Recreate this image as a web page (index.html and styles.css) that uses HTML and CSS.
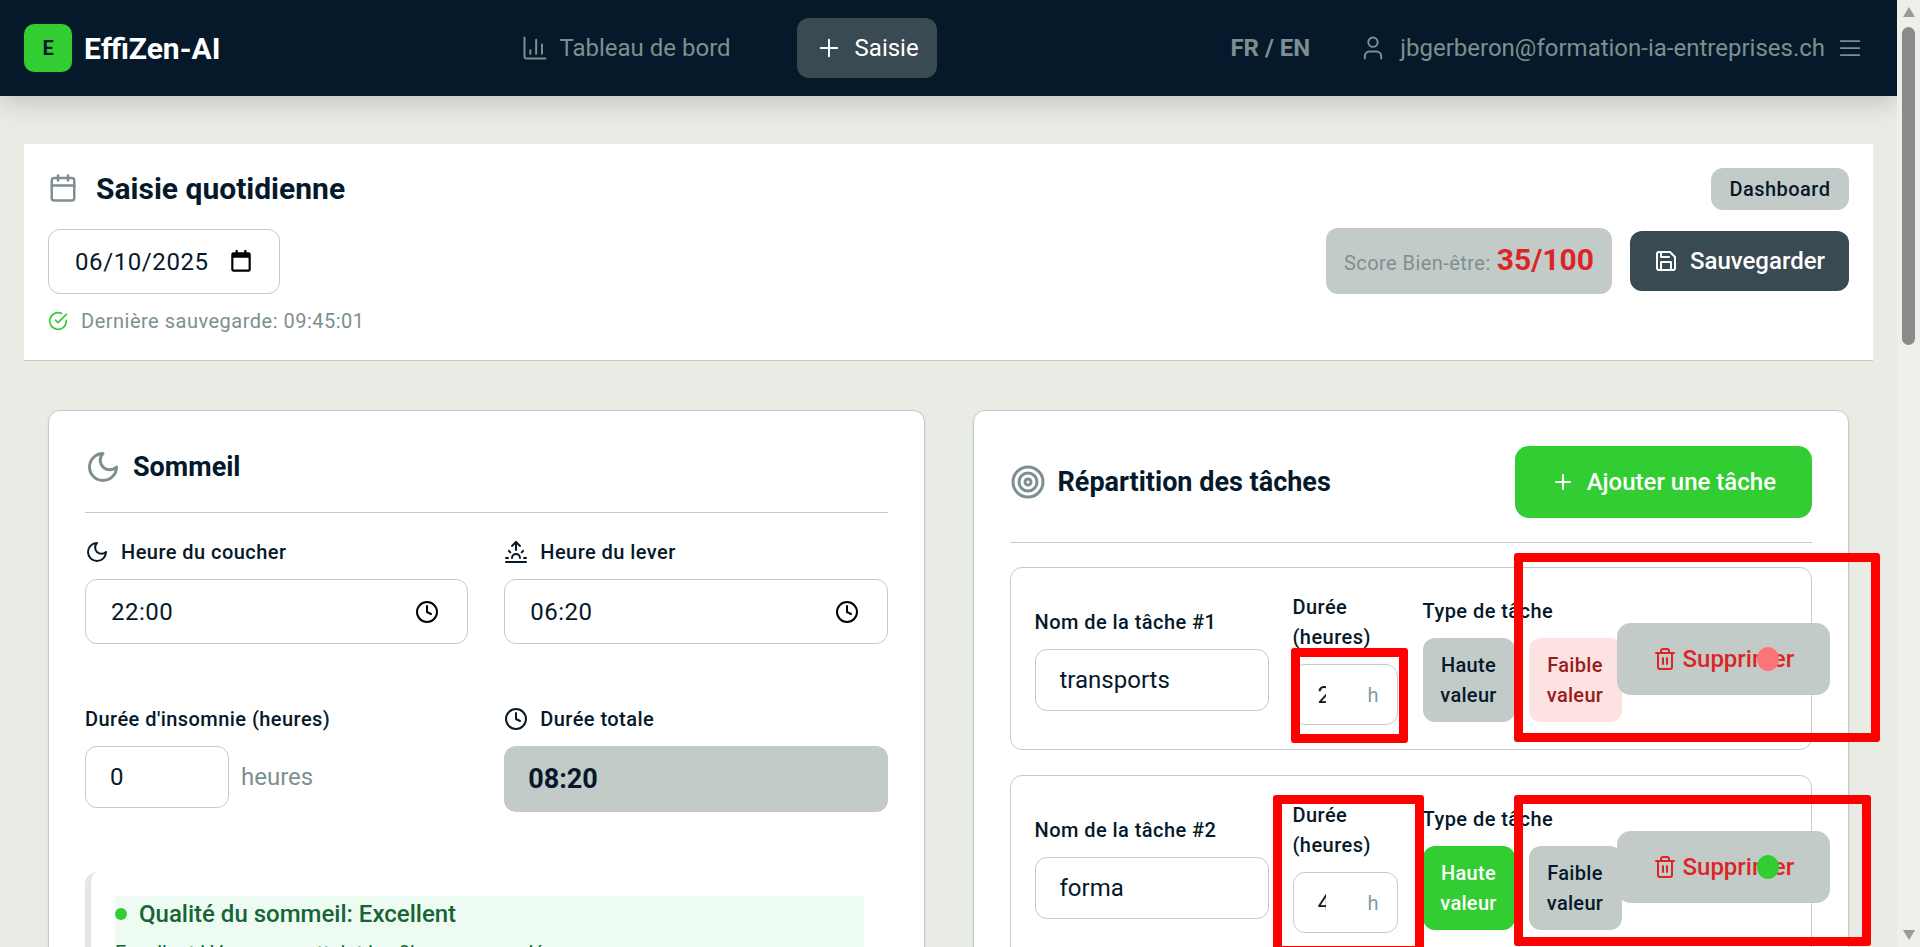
FILE: index.html
```html
<!DOCTYPE html>
<html lang="fr">
<head>
    <meta charset="UTF-8">
    <meta name="viewport" content="width=device-width, initial-scale=1.0">
    <title>EffiZen-AI - Saisie</title>
    <link rel="stylesheet" href="styles.css">
</head>
<body>
    <svg class="sprite" xmlns="http://www.w3.org/2000/svg">
        <symbol id="i-chart" viewBox="0 0 24 24"><path d="M3 3v16a2 2 0 0 0 2 2h16"/><path d="M8 17v-3"/><path d="M13 17V5"/><path d="M18 17V9"/></symbol>
        <symbol id="i-plus" viewBox="0 0 24 24"><path d="M5 12h14"/><path d="M12 5v14"/></symbol>
        <symbol id="i-user" viewBox="0 0 24 24"><path d="M19 21v-2a4 4 0 0 0-4-4H9a4 4 0 0 0-4 4v2"/><circle cx="12" cy="7" r="4"/></symbol>
        <symbol id="i-menu" viewBox="0 0 24 24"><path d="M4 6h16"/><path d="M4 12h16"/><path d="M4 18h16"/></symbol>
        <symbol id="i-calendar" viewBox="0 0 24 24"><rect x="3" y="4" width="18" height="18" rx="2"/><path d="M16 2v4"/><path d="M8 2v4"/><path d="M3 10h18"/></symbol>
        <symbol id="i-check" viewBox="0 0 24 24"><path d="M22 11.08V12a10 10 0 1 1-5.93-9.14"/><path d="M22 4 12 14.01l-3-3"/></symbol>
        <symbol id="i-save" viewBox="0 0 24 24"><path d="M19 21H5a2 2 0 0 1-2-2V5a2 2 0 0 1 2-2h11l5 5v11a2 2 0 0 1-2 2z"/><path d="M17 21v-8H7v8"/><path d="M7 3v5h8"/></symbol>
        <symbol id="i-moon" viewBox="0 0 24 24"><path d="M12 3a6 6 0 0 0 9 9 9 9 0 1 1-9-9Z"/></symbol>
        <symbol id="i-sunrise" viewBox="0 0 24 24"><path d="M12 2v8"/><path d="m4.93 10.93 1.41 1.41"/><path d="M2 18h2"/><path d="M20 18h2"/><path d="m19.07 10.93-1.41 1.41"/><path d="M22 22H2"/><path d="m8 6 4-4 4 4"/><path d="M16 18a4 4 0 0 0-8 0"/></symbol>
        <symbol id="i-clock" viewBox="0 0 24 24"><circle cx="12" cy="12" r="10"/><path d="M12 6v6l4 2"/></symbol>
        <symbol id="i-target" viewBox="0 0 24 24"><circle cx="12" cy="12" r="10"/><circle cx="12" cy="12" r="6"/><circle cx="12" cy="12" r="2"/></symbol>
        <symbol id="i-trash" viewBox="0 0 24 24"><path d="M3 6h18"/><path d="M19 6v14c0 1-1 2-2 2H7c-1 0-2-1-2-2V6"/><path d="M8 6V4c0-1 1-2 2-2h4c1 0 2 1 2 2v2"/><path d="M10 11v6"/><path d="M14 11v6"/></symbol>
    </svg>

    <div class="page">
        <header class="topbar">
            <div class="brand">
                <span class="brand-logo">E</span>
                <span class="brand-name">EffiZen-AI</span>
            </div>
            <nav class="nav">
                <a class="nav-item"><svg class="icon icon-28"><use href="#i-chart"/></svg>Tableau de bord</a>
                <a class="nav-item active"><svg class="icon icon-28"><use href="#i-plus"/></svg>Saisie</a>
            </nav>
            <div class="topbar-right">
                <span class="lang">FR / EN</span>
                <span class="account"><svg class="icon icon-28"><use href="#i-user"/></svg>jbgerberon@formation-ia-entreprises.ch</span>
                <svg class="icon icon-28 menu-icon"><use href="#i-menu"/></svg>
            </div>
        </header>

        <main class="content">
            <section class="daily">
                <div class="daily-row">
                    <h1 class="daily-title"><svg class="icon icon-30 muted"><use href="#i-calendar"/></svg>Saisie quotidienne</h1>
                    <button class="btn-dashboard">Dashboard</button>
                </div>
                <div class="daily-row daily-row-2">
                    <div class="field field-date">
                        <input type="text" value="06/10/2025">
                        <svg class="date-icon" viewBox="0 0 24 24"><path d="M17 3V1h-2v2H9V1H7v2H5a2 2 0 0 0-2 2v14c0 1.1.9 2 2 2h14a2 2 0 0 0 2-2V5a2 2 0 0 0-2-2h-2zm2 16H5V8h14v11z"/></svg>
                    </div>
                    <div class="daily-actions">
                        <div class="score">Score Bien-être: <strong>35/100</strong></div>
                        <button class="btn-save"><svg class="icon icon-24"><use href="#i-save"/></svg>Sauvegarder</button>
                    </div>
                </div>
                <p class="saved"><svg class="icon icon-20 green"><use href="#i-check"/></svg>Dernière sauvegarde: 09:45:01</p>
            </section>

            <div class="columns">
                <section class="card">
                    <div class="card-head">
                        <h2><svg class="icon icon-36 muted"><use href="#i-moon"/></svg>Sommeil</h2>
                    </div>
                    <div class="sleep-grid">
                        <div>
                            <label class="label"><svg class="icon icon-24"><use href="#i-moon"/></svg>Heure du coucher</label>
                            <div class="field field-time">
                                <input type="text" value="22:00">
                                <svg class="icon icon-24 black"><use href="#i-clock"/></svg>
                            </div>
                        </div>
                        <div>
                            <label class="label"><svg class="icon icon-24"><use href="#i-sunrise"/></svg>Heure du lever</label>
                            <div class="field field-time">
                                <input type="text" value="06:20">
                                <svg class="icon icon-24 black"><use href="#i-clock"/></svg>
                            </div>
                        </div>
                        <div>
                            <label class="label">Durée d'insomnie (heures)</label>
                            <div class="insomnia">
                                <div class="field field-insomnia"><input type="text" value="0"></div>
                                <span class="unit">heures</span>
                            </div>
                        </div>
                        <div>
                            <label class="label"><svg class="icon icon-24"><use href="#i-clock"/></svg>Durée totale</label>
                            <div class="total">08:20</div>
                        </div>
                    </div>
                    <div class="quality">
                        <div class="quality-inner">
                            <div class="quality-title"><span class="quality-dot"></span>Qualité du sommeil: Excellent</div>
                            <p class="quality-text">Excellent ! Vous avez atteint les 8h recommandées</p>
                        </div>
                    </div>
                </section>

                <section class="card">
                    <div class="card-head">
                        <h2><svg class="icon icon-36 muted"><use href="#i-target"/></svg>Répartition des tâches</h2>
                        <button class="btn-add"><svg class="icon icon-24"><use href="#i-plus"/></svg>Ajouter une tâche</button>
                    </div>

                    <div class="task">
                        <div class="task-name">
                            <label class="label">Nom de la tâche #1</label>
                            <div class="field field-task"><input type="text" value="transports"></div>
                        </div>
                        <div class="task-hours">
                            <label class="label">Durée (heures)</label>
                            <div class="field field-hours"><input type="text" value="2"><span class="hours-unit">h</span></div>
                        </div>
                        <div class="task-type">
                            <label class="label">Type de tâche</label>
                            <div class="type-buttons">
                                <button class="type-btn">Haute valeur</button>
                                <button class="type-btn low">Faible valeur</button>
                            </div>
                        </div>
                        <button class="btn-delete"><svg class="icon icon-24"><use href="#i-trash"/></svg>Supprimer</button>
                    </div>

                    <div class="task">
                        <div class="task-name">
                            <label class="label">Nom de la tâche #2</label>
                            <div class="field field-task"><input type="text" value="forma"></div>
                        </div>
                        <div class="task-hours">
                            <label class="label">Durée (heures)</label>
                            <div class="field field-hours"><input type="text" value="4"><span class="hours-unit">h</span></div>
                        </div>
                        <div class="task-type">
                            <label class="label">Type de tâche</label>
                            <div class="type-buttons">
                                <button class="type-btn high">Haute valeur</button>
                                <button class="type-btn">Faible valeur</button>
                            </div>
                        </div>
                        <button class="btn-delete"><svg class="icon icon-24"><use href="#i-trash"/></svg>Supprimer</button>
                    </div>
                </section>
            </div>
        </main>

        <!-- red marks drawn over the screenshot -->
        <div class="mark mark-1"></div>
        <div class="mark mark-2"></div>
        <div class="mark mark-3"></div>
        <div class="mark mark-4"></div>
        <div class="mark-dot dot-red"></div>
        <div class="mark-dot dot-green"></div>
    </div>

    <div class="scrollbar">
        <span class="scroll-up"></span>
        <span class="scroll-thumb"></span>
        <span class="scroll-down"></span>
    </div>
</body>
</html>
```

FILE: styles.css
```css
* {
    box-sizing: border-box;
}
html, body {
    height: 100%;
}
body {
    margin: 0;
    display: flex;
    overflow: hidden;
    font-family: Roboto, "Liberation Sans", sans-serif;
    font-size: 20px;
    color: #06192a;
    background-color: #e9ece4;
}
button {
    font-family: inherit;
    border: none;
    cursor: pointer;
}
h1, h2, p {
    margin: 0;
}
.sprite {
    display: none;
}
.icon {
    flex: none;
    fill: none;
    stroke: currentColor;
    stroke-width: 2;
    stroke-linecap: round;
    stroke-linejoin: round;
}
.icon-20 { width: 20px; height: 20px; }
.icon-24 { width: 24px; height: 24px; }
.icon-28 { width: 28px; height: 28px; stroke-width: 1.7; }
.icon-30 { width: 30px; height: 30px; }
.icon-36 { width: 36px; height: 36px; }
.muted { color: #7d8f90; }
.green { color: #32cd32; }
.black { color: #000; }

.page {
    position: relative;
    flex: 1;
    min-width: 0;
    height: 100%;
    overflow: hidden;
}

/* top bar */
.topbar {
    position: relative;
    z-index: 1;
    display: flex;
    align-items: center;
    height: 96px;
    padding: 0 33px 0 24px;
    background-color: #06192a;
    box-shadow: 0 6px 24px rgba(0, 0, 0, 0.18);
}
.brand {
    display: flex;
    align-items: center;
    gap: 12px;
}
.brand-logo {
    display: flex;
    align-items: center;
    justify-content: center;
    width: 48px;
    height: 48px;
    border-radius: 10px;
    background-color: #32cd32;
    color: #06192a;
    font-size: 20px;
    font-weight: 700;
}
.brand-name {
    color: #fff;
    font-size: 30px;
    font-weight: 700;
}
.nav {
    display: flex;
    gap: 48px;
    margin-left: 281px;
}
.nav-item {
    display: flex;
    align-items: center;
    gap: 12px;
    height: 60px;
    padding: 0 18px;
    border-radius: 12px;
    color: #7d8f90;
    font-size: 24px;
}
.nav-item:first-child {
    gap: 10px;
    padding-left: 20px;
}
.nav-item.active {
    background-color: #3a4a52;
    color: #fff;
}
.topbar-right {
    display: flex;
    align-items: center;
    margin-left: auto;
    color: #7d8f90;
    font-size: 24px;
}
.lang {
    font-weight: 700;
    margin-right: 49px;
}
.account {
    display: flex;
    align-items: center;
    gap: 13px;
}
.menu-icon {
    margin-left: 11px;
    stroke-width: 1.5;
}

/* main content */
.content {
    padding-top: 48px;
}
.daily {
    margin: 0 24px;
    padding: 24px;
    background-color: #fff;
    border-bottom: 1px solid #c2cbc8;
}
.daily-row {
    display: flex;
    align-items: center;
    justify-content: space-between;
}
.daily-row-2 {
    margin-top: 18px;
}
.daily-title {
    display: flex;
    align-items: center;
    gap: 18px;
    padding-bottom: 2px;
    font-size: 30px;
    font-weight: 700;
}
.btn-dashboard {
    height: 42px;
    width: 138px;
    padding: 0;
    border-radius: 12px;
    background-color: #c2cbc8;
    color: #06192a;
    font-size: 20px;
    font-weight: 500;
    letter-spacing: 0.45px;
}
.daily-actions {
    display: flex;
    align-items: center;
    gap: 18px;
}
.score {
    display: flex;
    align-items: baseline;
    gap: 6px;
    height: 66px;
    padding: 14px 18px 0;
    border-radius: 12px;
    background-color: #c2cbc8;
    color: #7d8f90;
    font-size: 20px;
    letter-spacing: 0.45px;
}
.score strong {
    color: #dc2626;
    font-size: 30px;
    font-weight: 700;
    letter-spacing: 0;
}
.btn-save {
    display: flex;
    align-items: center;
    gap: 12px;
    height: 60px;
    padding: 0 24px;
    border-radius: 12px;
    background-color: #3a4a52;
    color: #fff;
    font-size: 24px;
    font-weight: 500;
}
.saved {
    display: flex;
    align-items: center;
    gap: 13px;
    margin-top: 12px;
    line-height: 30px;
    color: #7d8f90;
    letter-spacing: 0.5px;
}

/* inputs */
.field {
    display: flex;
    align-items: center;
    height: 62px;
    padding: 0 24px;
    background-color: #fff;
    border: 1px solid #c2cbc8;
    border-radius: 12px;
}
.field input {
    flex: 1;
    width: 100%;
    min-width: 0;
    padding: 0;
    border: none;
    outline: none;
    background: none;
    font-family: inherit;
    font-size: 24px;
    color: #06192a;
}
.field-date {
    width: 232px;
    height: 65px;
    padding: 2px 25px 0 26px;
}
.field-date input {
    letter-spacing: 0.6px;
}
.date-icon {
    flex: none;
    width: 26px;
    height: 26px;
    fill: #000;
}
.field-time {
    height: 65px;
    padding-left: 25px;
    padding-right: 28px;
}
.field-time input {
    letter-spacing: 0.5px;
}
.field-insomnia {
    width: 144px;
}
.field-task {
    width: 234px;
}
.field-hours {
    width: 105px;
    height: 61px;
    padding-right: 18px;
}
.field-hours input {
    flex: none;
    width: 8px;
}
.hours-unit {
    margin-left: auto;
    color: #7f9aa8;
}
.label {
    display: flex;
    align-items: center;
    gap: 12px;
    margin-bottom: 12px;
    line-height: 30px;
    font-size: 20px;
    font-weight: 500;
    letter-spacing: 0.45px;
}

/* cards */
.columns {
    display: grid;
    grid-template-columns: 1fr 1fr;
    gap: 48px;
    padding: 49px 48px 0;
}
.card {
    min-width: 0;
    padding: 35px 36px 36px;
    background-color: #fff;
    border: 1px solid #c2cbc8;
    border-radius: 12px;
    box-shadow: 0 1px 3px rgba(0, 0, 0, 0.08);
}
.card-head {
    display: flex;
    align-items: center;
    justify-content: space-between;
    min-height: 42px;
    padding-bottom: 24px;
    margin-bottom: 24px;
    border-bottom: 1px solid #c2cbc8;
    box-sizing: content-box;
}
.card-head h2 {
    display: flex;
    align-items: center;
    gap: 12px;
    line-height: 40px;
    font-size: 27px;
    font-weight: 700;
}
.btn-add {
    display: flex;
    align-items: center;
    gap: 12px;
    height: 72px;
    padding: 0 36px;
    border-radius: 14px;
    background-color: #32cd32;
    color: #fff;
    font-size: 24px;
    font-weight: 500;
}

/* sleep */
.sleep-grid {
    display: grid;
    grid-template-columns: 1fr 1fr;
    column-gap: 36px;
    row-gap: 60px;
    margin-top: 1px;
}
.insomnia {
    display: flex;
    align-items: center;
    gap: 12px;
}
.unit {
    color: #7d8f90;
    font-size: 24px;
}
.total {
    display: flex;
    align-items: center;
    height: 66px;
    padding: 0 24px;
    border-radius: 12px;
    background-color: #c2cbc8;
    font-size: 27px;
    font-weight: 700;
}
.quality {
    margin-top: 60px;
    padding: 24px;
    border-left: 6px solid #e5e5ea;
    border-radius: 12px;
}
.quality-inner {
    background-color: #eefbf3;
    color: #166534;
}
.quality-title {
    display: flex;
    align-items: center;
    gap: 12px;
    line-height: 36px;
    font-size: 24px;
    font-weight: 500;
}
.quality-dot {
    width: 12px;
    height: 12px;
    border-radius: 50%;
    background-color: #32cd32;
}
.quality-text {
    margin-top: 6px;
    line-height: 30px;
}

/* tasks */
.task {
    display: flex;
    align-items: center;
    gap: 24px;
    margin-bottom: 25px;
    padding: 24px;
    border: 1px solid #c2cbc8;
    border-radius: 12px;
}
.task-hours {
    width: 105px;
}
.task-type {
    flex: none;
    width: 170px;
    margin-left: 1px;
}
.type-buttons {
    display: flex;
    gap: 14px;
}
.type-btn {
    flex: none;
    width: 92px;
    height: 84px;
    padding: 0;
    border-radius: 12px;
    background-color: #c2cbc8;
    color: #06192a;
    font-size: 20px;
    font-weight: 500;
    line-height: 30px;
    letter-spacing: 0.3px;
}
.type-btn + .type-btn {
    width: 93px;
}
.type-btn.low {
    background-color: #fde2e2;
    color: #991b1b;
}
.type-btn.high {
    background-color: #32cd32;
    color: #fff;
}
.btn-delete {
    position: relative;
    flex: none;
    display: flex;
    align-items: center;
    gap: 6px;
    height: 72px;
    padding: 0 36px;
    border-radius: 14px;
    background-color: #c2cbc8;
    color: #dc2626;
    font-size: 24px;
    font-weight: 500;
}

/* annotations */
.mark {
    position: absolute;
    z-index: 2;
    border: 9px solid #f00;
    border-radius: 3px;
}
.mark-1 { left: 1291px; top: 648px; width: 117px; height: 95px; }
.mark-2 { left: 1514px; top: 553px; width: 366px; height: 189px; }
.mark-3 { left: 1273px; top: 795px; width: 151px; height: 160px; }
.mark-4 { left: 1514px; top: 795px; width: 357px; height: 151px; }
.mark-dot {
    position: absolute;
    z-index: 2;
    width: 22px;
    height: 24px;
    border-radius: 50%;
}
.dot-red { left: 1757px; top: 647px; background-color: #fb7477; }
.dot-green { left: 1757px; top: 855px; background-color: #32cd32; }

/* scrollbar strip */
.scrollbar {
    position: relative;
    flex: none;
    width: 23px;
    height: 100%;
    background-color: #edefe8;
}
.scroll-thumb {
    position: absolute;
    left: 5px;
    top: 27px;
    width: 13px;
    height: 318px;
    border-radius: 7px;
    background-color: #8a8a8a;
}
.scroll-up, .scroll-down {
    position: absolute;
    left: 6px;
    border-left: 6px solid transparent;
    border-right: 6px solid transparent;
}
.scroll-up {
    top: 7px;
    border-bottom: 10px solid #9a9a9a;
}
.scroll-down {
    bottom: 7px;
    border-top: 10px solid #9a9a9a;
}
```
